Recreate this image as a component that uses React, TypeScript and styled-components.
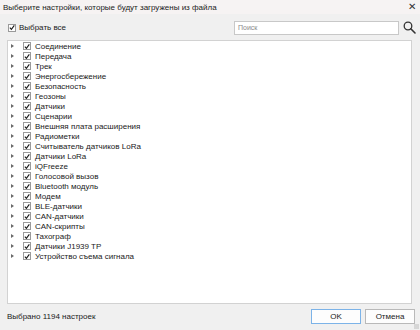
import React from 'react';
import styled, { createGlobalStyle } from 'styled-components';

const GlobalStyle = createGlobalStyle`
  html, body {
    margin: 0;
    padding: 0;
    background: #f0f0f0;
  }
  * {
    box-sizing: border-box;
  }
`;

const sections = [
  'Соединение',
  'Передача',
  'Трек',
  'Энергосбережение',
  'Безопасность',
  'Геозоны',
  'Датчики',
  'Сценарии',
  'Внешняя плата расширения',
  'Радиометки',
  'Считыватель датчиков LoRa',
  'Датчики LoRa',
  'iQFreeze',
  'Голосовой вызов',
  'Bluetooth модуль',
  'Модем',
  'BLE-датчики',
  'CAN-датчики',
  'CAN-скрипты',
  'Тахограф',
  'Датчики J1939 TP',
  'Устройство съема сигнала',
];

const Window = styled.div`
  width: 420px;
  height: 330px;
  display: flex;
  flex-direction: column;
  background: #f0f0f0;
  font-family: 'Liberation Sans', Arial, sans-serif;
  font-size: 8px;
  color: #1a1a1a;
  position: relative;
  overflow: hidden;
`;

const TitleBar = styled.div`
  height: 14px;
  display: flex;
  align-items: center;
  justify-content: space-between;
  padding: 0 4px 0 3px;
  background: #f6f3f3;
  color: #222;
`;

const CloseButton = styled.span`
  font-size: 10px;
  color: #333;
  line-height: 1;
`;

const Toolbar = styled.div`
  height: 26px;
  display: flex;
  align-items: center;
  justify-content: space-between;
  padding: 1px 4px 0 8px;
`;

const CheckLabel = styled.label`
  display: flex;
  align-items: center;
  gap: 3px;
`;

const Box = styled.span`
  width: 8px;
  height: 8px;
  border: 1px solid #9a9a9a;
  background: #fff;
  display: inline-flex;
  align-items: center;
  justify-content: center;
`;

const SearchWrap = styled.div`
  display: flex;
  align-items: center;
  gap: 4px;
`;

const SearchInput = styled.div`
  width: 165px;
  height: 14px;
  border: 1px solid #c8c8c8;
  background: #fff;
  padding-left: 3px;
  display: flex;
  align-items: center;
  font-size: 7px;
  color: #8a8a8a;
`;

const TreePanel = styled.div`
  margin: 0 8px 0 7px;
  height: 264px;
  background: #fff;
  border: 1px solid #d2d2d2;
`;

const Row = styled.div`
  height: 10px;
  display: flex;
  align-items: center;
  padding-left: 3px;
`;

const Arrow = styled.span`
  width: 0;
  height: 0;
  border-top: 2.5px solid transparent;
  border-bottom: 2.5px solid transparent;
  border-left: 3px solid #6a6a6a;
  margin-right: 9px;
`;

const RowText = styled.span`
  margin-left: 4px;
  white-space: nowrap;
`;

const Footer = styled.div`
  flex: 1;
  display: flex;
  align-items: center;
  justify-content: space-between;
  padding: 0 5px 2px 7px;
`;

const Buttons = styled.div`
  display: flex;
  gap: 4px;
`;

const Button = styled.div<{ $primary?: boolean }>`
  width: 50px;
  height: 15px;
  display: flex;
  align-items: center;
  justify-content: center;
  background: #fdfdfd;
  border: 1px solid ${(p) => (p.$primary ? '#7cb3e8' : '#b9b9b9')};
  color: #1a1a1a;
`;

const Grip = styled.div`
  position: absolute;
  right: 1px;
  bottom: 1px;
  width: 5px;
  height: 5px;
  background-image: radial-gradient(#b8b8b8 0.6px, transparent 0.8px);
  background-size: 2px 2px;
`;

const Check = () => (
  <svg width="7" height="7" viewBox="0 0 7 7">
    <path d="M1 3.6 L2.8 5.6 L6.2 1" fill="none" stroke="#1a1a1a" strokeWidth="1.3" />
  </svg>
);

const SearchIcon = () => (
  <svg width="13" height="13" viewBox="0 0 13 13">
    <circle cx="5" cy="5" r="3.8" fill="none" stroke="#333" strokeWidth="1.3" />
    <path d="M7.8 7.8 L12 12" stroke="#333" strokeWidth="1.6" strokeLinecap="round" />
  </svg>
);

export default function App() {
  return (
    <>
      <GlobalStyle />
      <Window>
        <TitleBar>
          <span>Выберите настройки, которые будут загружены из файла</span>
          <CloseButton>✕</CloseButton>
        </TitleBar>
        <Toolbar>
          <CheckLabel>
            <Box>
              <Check />
            </Box>
            Выбрать все
          </CheckLabel>
          <SearchWrap>
            <SearchInput>Поиск</SearchInput>
            <SearchIcon />
          </SearchWrap>
        </Toolbar>
        <TreePanel>
          {sections.map((s) => (
            <Row key={s}>
              <Arrow />
              <Box>
                <Check />
              </Box>
              <RowText>{s}</RowText>
            </Row>
          ))}
        </TreePanel>
        <Footer>
          <span>Выбрано 1194 настроек</span>
          <Buttons>
            <Button $primary>OK</Button>
            <Button>Отмена</Button>
          </Buttons>
        </Footer>
        <Grip />
      </Window>
    </>
  );
}
